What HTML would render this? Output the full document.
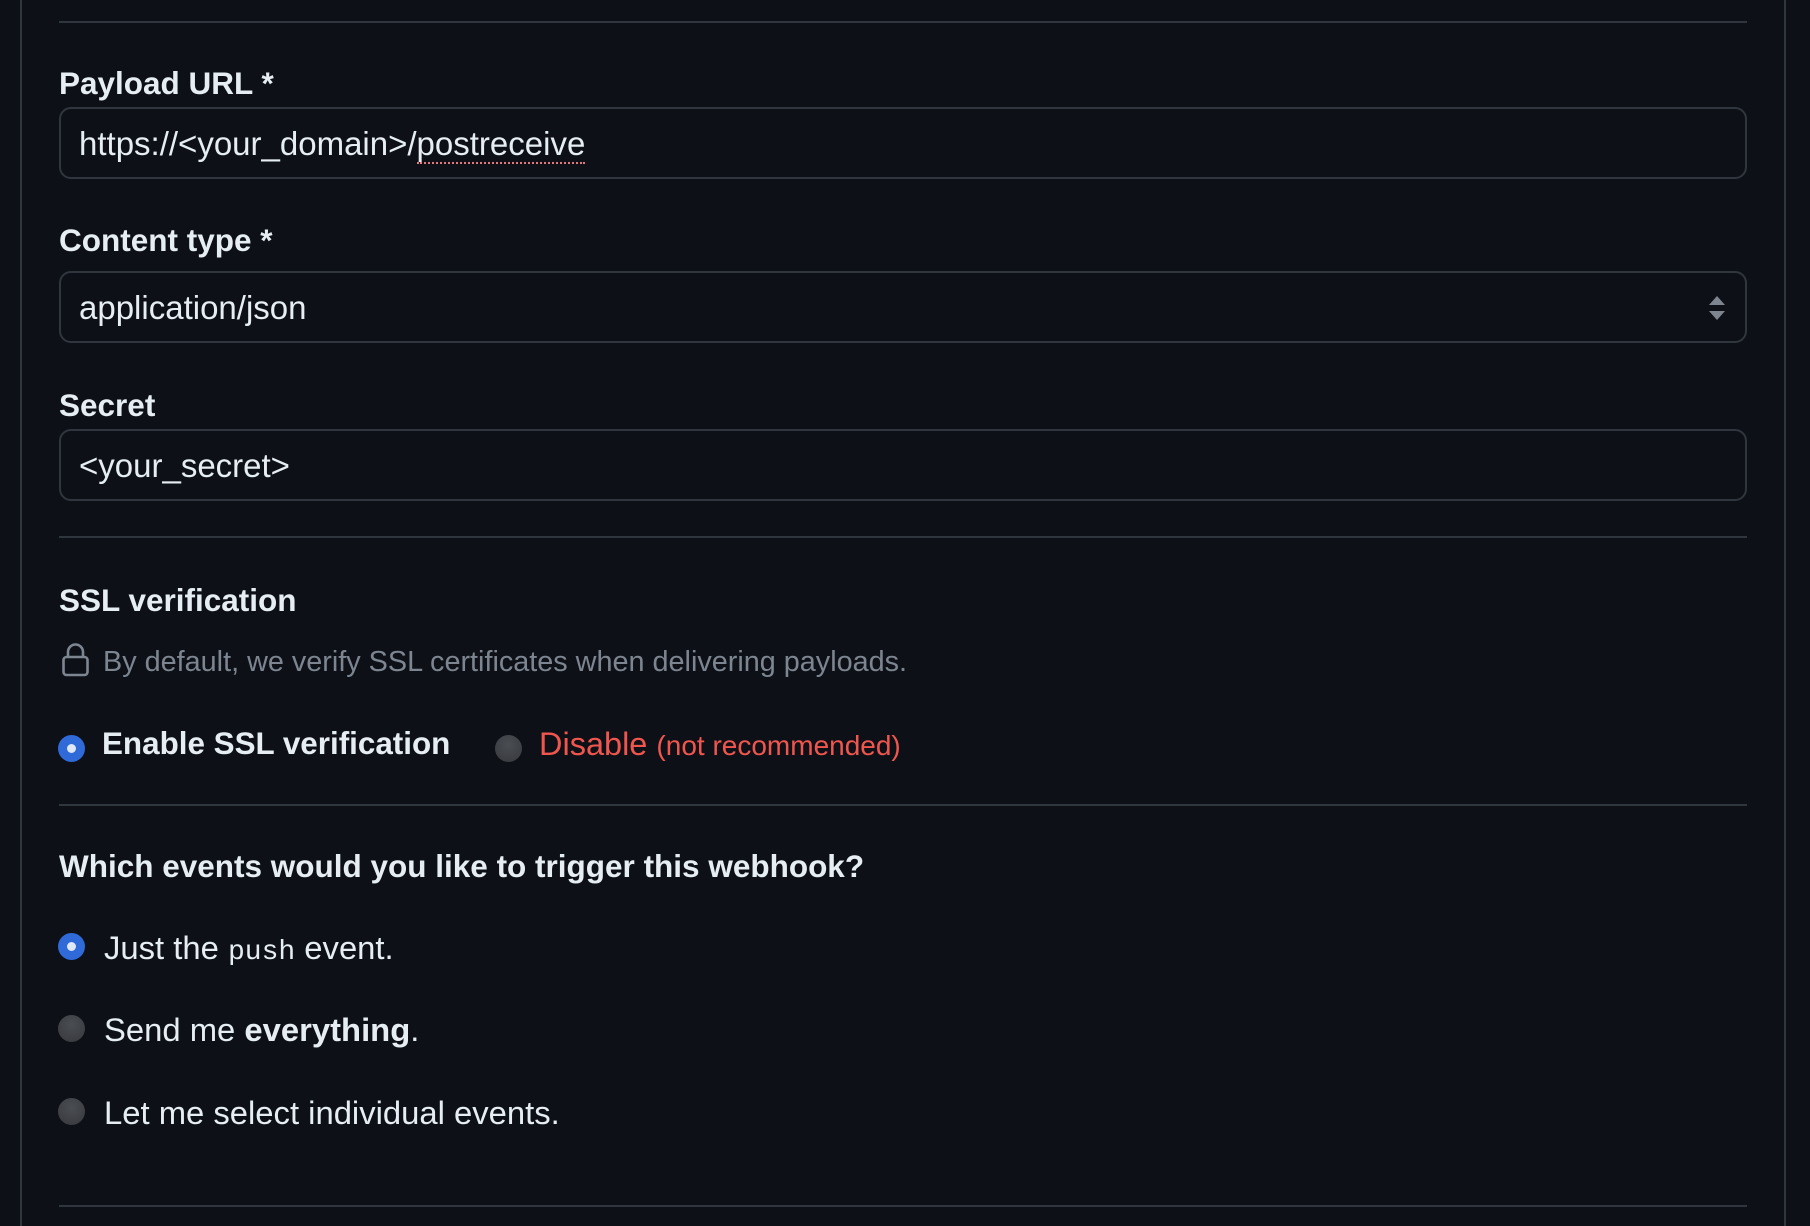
<!DOCTYPE html>
<html><head><meta charset="utf-8"><style>
*{margin:0;padding:0;box-sizing:border-box}
body{width:1810px;height:1226px;background:#0d1117;position:relative;overflow:hidden;font-family:"Liberation Sans",sans-serif;color:#e6edf3}
.a{position:absolute;white-space:nowrap}
.vl{position:absolute;top:0;bottom:0;width:2px;background:#30363d}
.hr{position:absolute;left:59px;width:1688px;height:2px;background:#30363d}
.lbl{font-weight:bold;font-size:31.5px;line-height:36px}
.inp{position:absolute;left:59px;width:1688px;height:72px;border:2px solid #30363d;border-radius:12px;background:#0d1117}
.inp span{position:absolute;left:18px;top:0;line-height:70px;font-size:33px}
.r{position:absolute;width:27px;height:27px;border-radius:50%;background:radial-gradient(circle at 50% 35%,#4a4d52,#36383d)}
.r.on{background:#2f6ad8}
.r.on::after{content:"";position:absolute;left:9px;top:9px;width:9px;height:9px;border-radius:50%;background:#dfe8f7}
.t{font-size:32.8px;line-height:36px}
</style></head><body>
<div class="vl" style="left:20px"></div>
<div class="vl" style="left:1784px"></div>
<div class="hr" style="top:21px"></div>

<div class="a lbl" style="left:59px;top:65px">Payload URL *</div>
<div class="inp" style="top:107px"><span>https://&lt;your_domain&gt;/<span style="position:static;border-bottom:2px dotted #e5787a;line-height:normal">postreceive</span></span></div>

<div class="a lbl" style="left:59px;top:222px">Content type *</div>
<div class="inp" style="top:271px"><span>application/json</span>
<svg style="position:absolute;right:18px;top:22px" width="20" height="26" viewBox="0 0 20 26"><path d="M10 1 L18 10 H2Z M10 25 L18 16 H2Z" fill="#7d8590"/></svg></div>

<div class="a lbl" style="left:59px;top:387px">Secret</div>
<div class="inp" style="top:429px"><span>&lt;your_secret&gt;</span></div>

<div class="hr" style="top:536px"></div>
<div class="a lbl" style="left:59px;top:582px">SSL verification</div>
<svg class="a" style="left:61px;top:642px" width="29" height="36" viewBox="0 0 29 36"><path d="M7 15 V10 a7.5 7.5 0 0 1 15 0 V15" fill="none" stroke="#7d8590" stroke-width="2.6"/><rect x="2.5" y="15" width="24" height="18" rx="3" fill="none" stroke="#7d8590" stroke-width="2.6"/></svg>
<div class="a" style="left:103px;top:646px;font-size:28.8px;line-height:32px;color:#7d8590">By default, we verify SSL certificates when delivering payloads.</div>

<div class="r on" style="left:58px;top:735px"></div>
<div class="a t" style="left:102px;top:726px;font-weight:bold;font-size:31.4px">Enable SSL verification</div>
<div class="r" style="left:495px;top:735px"></div>
<div class="a" style="left:539px;top:726px;font-size:32.5px;line-height:36px;color:#f0564e">Disable <span style="font-size:28px">(not recommended)</span></div>

<div class="hr" style="top:804px"></div>
<div class="a lbl" style="left:59px;top:848px">Which events would you like to trigger this webhook?</div>

<div class="r on" style="left:58px;top:933px"></div>
<div class="a t" style="left:104px;top:930px">Just the <span style="font-family:'Liberation Mono',monospace;font-size:28px">push</span> event.</div>
<div class="r" style="left:58px;top:1015px"></div>
<div class="a t" style="left:104px;top:1012px">Send me <b>everything</b>.</div>
<div class="r" style="left:58px;top:1098px"></div>
<div class="a t" style="left:104px;top:1095px">Let me select individual events.</div>

<div class="hr" style="top:1205px"></div>
</body></html>
